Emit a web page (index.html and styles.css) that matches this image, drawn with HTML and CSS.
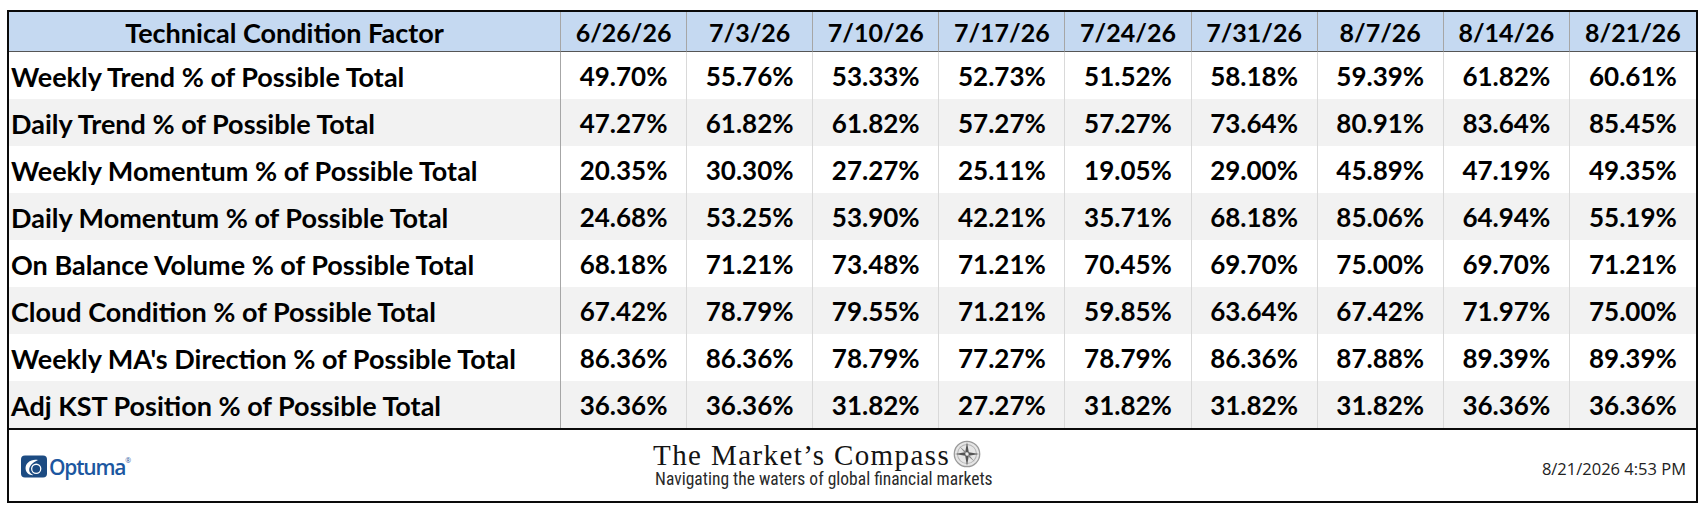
FILE: index.html
```html
<!DOCTYPE html>
<html>
<head>
<meta charset="utf-8">
<link rel="stylesheet" href="styles.css">
</head>
<body>
<div class="frame">
  <div class="grid">
    <div class="cell head label-head">Technical Condition Factor</div>
    <div class="cell head">6/26/26</div>
    <div class="cell head">7/3/26</div>
    <div class="cell head">7/10/26</div>
    <div class="cell head">7/17/26</div>
    <div class="cell head">7/24/26</div>
    <div class="cell head">7/31/26</div>
    <div class="cell head">8/7/26</div>
    <div class="cell head">8/14/26</div>
    <div class="cell head last">8/21/26</div>

    <div class="cell label">Weekly Trend % of Possible Total</div>
    <div class="cell">49.70%</div><div class="cell">55.76%</div><div class="cell">53.33%</div><div class="cell">52.73%</div><div class="cell">51.52%</div><div class="cell">58.18%</div><div class="cell">59.39%</div><div class="cell">61.82%</div><div class="cell last">60.61%</div>

    <div class="cell label alt">Daily Trend % of Possible Total</div>
    <div class="cell alt">47.27%</div><div class="cell alt">61.82%</div><div class="cell alt">61.82%</div><div class="cell alt">57.27%</div><div class="cell alt">57.27%</div><div class="cell alt">73.64%</div><div class="cell alt">80.91%</div><div class="cell alt">83.64%</div><div class="cell alt last">85.45%</div>

    <div class="cell label">Weekly Momentum % of Possible Total</div>
    <div class="cell">20.35%</div><div class="cell">30.30%</div><div class="cell">27.27%</div><div class="cell">25.11%</div><div class="cell">19.05%</div><div class="cell">29.00%</div><div class="cell">45.89%</div><div class="cell">47.19%</div><div class="cell last">49.35%</div>

    <div class="cell label alt">Daily Momentum % of Possible Total</div>
    <div class="cell alt">24.68%</div><div class="cell alt">53.25%</div><div class="cell alt">53.90%</div><div class="cell alt">42.21%</div><div class="cell alt">35.71%</div><div class="cell alt">68.18%</div><div class="cell alt">85.06%</div><div class="cell alt">64.94%</div><div class="cell alt last">55.19%</div>

    <div class="cell label">On Balance Volume % of Possible Total</div>
    <div class="cell">68.18%</div><div class="cell">71.21%</div><div class="cell">73.48%</div><div class="cell">71.21%</div><div class="cell">70.45%</div><div class="cell">69.70%</div><div class="cell">75.00%</div><div class="cell">69.70%</div><div class="cell last">71.21%</div>

    <div class="cell label alt">Cloud Condition % of Possible Total</div>
    <div class="cell alt">67.42%</div><div class="cell alt">78.79%</div><div class="cell alt">79.55%</div><div class="cell alt">71.21%</div><div class="cell alt">59.85%</div><div class="cell alt">63.64%</div><div class="cell alt">67.42%</div><div class="cell alt">71.97%</div><div class="cell alt last">75.00%</div>

    <div class="cell label">Weekly MA's Direction % of Possible Total</div>
    <div class="cell">86.36%</div><div class="cell">86.36%</div><div class="cell">78.79%</div><div class="cell">77.27%</div><div class="cell">78.79%</div><div class="cell">86.36%</div><div class="cell">87.88%</div><div class="cell">89.39%</div><div class="cell last">89.39%</div>

    <div class="cell label alt">Adj KST Position % of Possible Total</div>
    <div class="cell alt">36.36%</div><div class="cell alt">36.36%</div><div class="cell alt">31.82%</div><div class="cell alt">27.27%</div><div class="cell alt">31.82%</div><div class="cell alt">31.82%</div><div class="cell alt">31.82%</div><div class="cell alt">36.36%</div><div class="cell alt last">36.36%</div>
  </div>

  <div class="footer">
    <div class="optuma">
      <svg class="optuma-icon" width="26" height="23" viewBox="0 0 26 22">
        <path d="M4 0 H22 Q26 0 26 4 V18 Q26 22 22 22 H4 Q0 22 0 18 V4 Q0 0 4 0 Z" fill="#1c4b82"/>
        <path d="M17 4.5 C10 3.2 4 7.5 4.6 13.5 C5 17.5 8.5 20 12.5 19.6 C9 18.5 7.6 15.5 8.4 12.6 C9.5 8.8 13.5 6.3 17 4.5 Z" fill="#ffffff"/>
        <circle cx="15.2" cy="13.3" r="5.2" fill="#ffffff"/>
        <circle cx="15.2" cy="13.3" r="3.9" fill="#1c4b82"/>
      </svg>
      <span class="optuma-text">Optuma</span><span class="reg">®</span>
    </div>
    <div class="brand">
      <div class="brand-title">The Market’s Compass
        <svg class="compass" width="28" height="28" viewBox="0 0 22 22">
          <circle cx="11" cy="11" r="10" fill="#e6e6e6" stroke="#9a9a9a" stroke-width="1"/>
          <circle cx="11" cy="11" r="7.5" fill="none" stroke="#b5b5b5" stroke-width="0.8"/>
          <path d="M11 1.5 L12.4 9.6 L20.5 11 L12.4 12.4 L11 20.5 L9.6 12.4 L1.5 11 L9.6 9.6 Z" fill="#555"/>
          <path d="M5 5 L11.6 10.4 L17 17 L10.4 11.6 Z M17 5 L11.6 10.4 L5 17 L10.4 11.6 Z" fill="#888"/>
          <circle cx="11" cy="11" r="1.3" fill="#eee"/>
        </svg>
      </div>
      <div class="brand-sub">Navigating the waters of global financial markets</div>
    </div>
    <div class="stamp">8/21/2026 4:53 PM</div>
  </div>
</div>
</body>
</html>
```
FILE: styles.css
```css
html, body {
  margin: 0;
  padding: 0;
  background: #ffffff;
}

.frame {
  margin: 10px 0 0 7px;
  width: 1687px;
  border: 2px solid #0a0a0a;
  font-family: Lato, "Open Sans", sans-serif;
  color: #000;
}

.grid {
  display: grid;
  grid-template-columns: 552px repeat(9, 1fr);
  grid-template-rows: 40px repeat(8, 47px);
  border-bottom: 2px solid #0a0a0a;
}

.cell {
  display: flex;
  align-items: center;
  justify-content: center;
  font-weight: 700;
  font-size: 26px;
  background: #ffffff;
  border-right: 1px solid #d9d9d9;
  padding-top: 1px;
  box-sizing: border-box;
  white-space: nowrap;
}

.cell.alt {
  background: #f2f2f2;
}

.cell.last {
  border-right: none;
}

.cell.head {
  background: #c5d9f1;
  border-bottom: 1px solid #555;
  border-right: 1px solid #a6a6a6;
  font-size: 25px;
}

.cell.head.label-head {
  font-size: 27px;
}

.cell.head.last {
  border-right: none;
}

.cell.label {
  justify-content: flex-start;
  padding-left: 2px;
  font-size: 27px;
  border-right: 1px solid #a6a6a6;
}

.footer {
  height: 71px;
  display: flex;
  align-items: center;
  justify-content: space-between;
}

.optuma {
  display: flex;
  align-items: center;
  margin-left: 12px;
  margin-top: 2px;
}

.optuma-icon {
  display: block;
}

.optuma-text {
  font-family: "Open Sans", sans-serif;
  font-weight: 600;
  font-size: 21px;
  letter-spacing: -1.2px;
  color: #1c57a0;
  margin-left: 2px;
}

.reg {
  font-family: "Open Sans", sans-serif;
  font-size: 7px;
  color: #1c57a0;
  align-self: flex-start;
  margin-top: 3px;
}

.brand {
  display: flex;
  flex-direction: column;
  align-items: flex-start;
  margin-left: 522px;
  margin-top: 0;
}

.brand-title {
  display: flex;
  align-items: center;
  font-family: "Liberation Serif", serif;
  font-size: 29px;
  letter-spacing: 1.4px;
  color: #141414;
  line-height: 28px;
}

.compass {
  margin-left: 3px;
  margin-top: -3px;
}

.brand-sub {
  font-family: "Liberation Sans Narrow", "Roboto Condensed", "Open Sans", sans-serif;
  font-stretch: condensed;
  font-size: 17.5px;
  color: #2a2a2a;
  margin-left: 2px;
  line-height: 21px;
}

.stamp {
  margin-left: auto;
  margin-right: 10px;
  margin-top: 6px;
  font-family: "Open Sans", sans-serif;
  font-size: 16.5px;
  color: #222;
}
```
